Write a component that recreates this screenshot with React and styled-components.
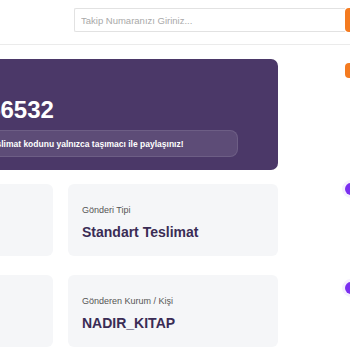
import React from "react";
import styled, { createGlobalStyle } from "styled-components";

const Global = createGlobalStyle`
  html, body { margin: 0; padding: 0; background: #ffffff; overflow: hidden; }
  body { font-family: "Liberation Sans", Arial, sans-serif; }
  * { box-sizing: border-box; }
`;

const Page = styled.div`
  width: 640px;
  margin-left: -157px;
`;

const Header = styled.header`
  height: 45px;
  display: flex;
  align-items: flex-start;
  padding-top: 8px;
  border-bottom: 1px solid #ebebeb;
`;

const Brand = styled.div`
  flex: 0 0 231px;
  font-size: 14px;
  font-weight: bold;
  color: #4b3868;
  line-height: 24px;
`;

const SearchForm = styled.form`
  display: flex;
  align-items: stretch;
  height: 24px;
`;

const SearchInput = styled.input`
  width: 271px;
  height: 24px;
  border: 1px solid #e2e2e2;
  border-right: none;
  border-radius: 2px 0 0 2px;
  padding: 0 6px;
  font-family: "Liberation Sans", Arial, sans-serif;
  font-size: 9.5px;
  color: #333;
  outline: none;
  &::placeholder { color: #a9a9a9; }
`;

const SearchButton = styled.button`
  width: 70px;
  border: none;
  border-radius: 4px;
  background: #f47b20;
  color: #fff;
  font-size: 10px;
`;

const Body = styled.main`
  display: flex;
  align-items: flex-start;
  padding-top: 14px;
`;

const MainColumn = styled.section`
  flex: 0 0 435px;
  display: flex;
  flex-direction: column;
  gap: 14px;
`;

const CodeCard = styled.div`
  background: #4b3868;
  border-radius: 7px;
  padding: 18px 24px 13px;
  color: #ffffff;
  display: flex;
  flex-direction: column;
`;

const CodeLabel = styled.div`
  font-size: 10px;
  line-height: 14px;
  margin-bottom: 4px;
  color: rgba(255, 255, 255, 0.75);
`;

const CodeNumber = styled.div`
  font-size: 24px;
  font-weight: bold;
  line-height: 29px;
  letter-spacing: 0;
`;

const Notice = styled.div`
  margin-top: 6px;
  margin-right: 16px;
  height: 27px;
  display: flex;
  align-items: center;
  gap: 10px;
  padding: 0 14px 0 25px;
  border-radius: 8px;
  background: rgba(255, 255, 255, 0.1);
  border: 1px solid rgba(255, 255, 255, 0.1);
  font-size: 8.5px;
  font-weight: bold;
  white-space: nowrap;
`;

const InfoGrid = styled.div`
  display: grid;
  grid-template-columns: 210px 210px;
  column-gap: 15px;
  row-gap: 19px;
`;

const InfoCard = styled.div`
  background: #f5f6f8;
  border-radius: 6px;
  padding: 20px 14px 15px;
  display: flex;
  flex-direction: column;
  gap: 7px;
`;

const InfoLabel = styled.div`
  font-size: 9px;
  line-height: 12px;
  color: #555555;
`;

const InfoValue = styled.div`
  font-size: 14px;
  line-height: 18px;
  font-weight: bold;
  color: #3a2c55;
`;

const Sidebar = styled.aside`
  margin-left: 52px;
  padding: 4px 0 0 15px;
  display: flex;
  flex-direction: column;
`;

const StatusBadge = styled.div`
  width: 60px;
  height: 15px;
  border-radius: 4px;
  background: #f47b20;
`;

const Timeline = styled.ul`
  list-style: none;
  margin: 105px 0 0;
  padding: 0;
  display: flex;
  flex-direction: column;
`;

const TimelineItem = styled.li`
  height: 99px;
  display: flex;
  align-items: flex-start;
  gap: 10px;
`;

const Dot = styled.span`
  flex: 0 0 12px;
  width: 12px;
  height: 12px;
  border-radius: 50%;
  background: #7b2ff0;
  box-shadow: 0 0 0 3px rgba(123, 47, 240, 0.08);
`;

const TimelineText = styled.span`
  font-size: 10px;
  color: #333;
`;

function AlertIcon() {
  return (
    <svg width="16" height="16" viewBox="0 0 24 24" fill="none" stroke="currentColor" strokeWidth="2" strokeLinecap="round" strokeLinejoin="round">
      <circle cx="12" cy="12" r="10" />
      <line x1="12" y1="8" x2="12" y2="12" />
      <line x1="12" y1="16" x2="12.01" y2="16" />
    </svg>
  );
}

const infos = [
  { label: "Takip Numarası", value: "KT2024" },
  { label: "Gönderi Tipi", value: "Standart Teslimat" },
  { label: "Alıcı", value: "M***" },
  { label: "Gönderen Kurum / Kişi", value: "NADIR_KITAP" },
];

export default function App() {
  return (
    <>
      <Global />
      <Page>
        <Header>
          <Brand>Kargo Takip</Brand>
          <SearchForm onSubmit={(e) => e.preventDefault()}>
            <SearchInput placeholder="Takip Numaranızı Giriniz..." />
            <SearchButton type="submit">Sorgula</SearchButton>
          </SearchForm>
        </Header>
        <Body>
          <MainColumn>
            <CodeCard>
              <CodeLabel>Teslimat Kodu</CodeLabel>
              <CodeNumber>87301948256532</CodeNumber>
              <Notice>
                <AlertIcon />
                <span>Güvenliğiniz için teslimat kodunu yalnızca taşımacı ile paylaşınız!</span>
              </Notice>
            </CodeCard>
            <InfoGrid>
              {infos.map((i) => (
                <InfoCard key={i.label}>
                  <InfoLabel>{i.label}</InfoLabel>
                  <InfoValue>{i.value}</InfoValue>
                </InfoCard>
              ))}
            </InfoGrid>
          </MainColumn>
          <Sidebar>
            <StatusBadge />
            <Timeline>
              <TimelineItem>
                <Dot />
                <TimelineText>Dağıtımda</TimelineText>
              </TimelineItem>
              <TimelineItem>
                <Dot />
                <TimelineText>Transfer</TimelineText>
              </TimelineItem>
            </Timeline>
          </Sidebar>
        </Body>
      </Page>
    </>
  );
}
